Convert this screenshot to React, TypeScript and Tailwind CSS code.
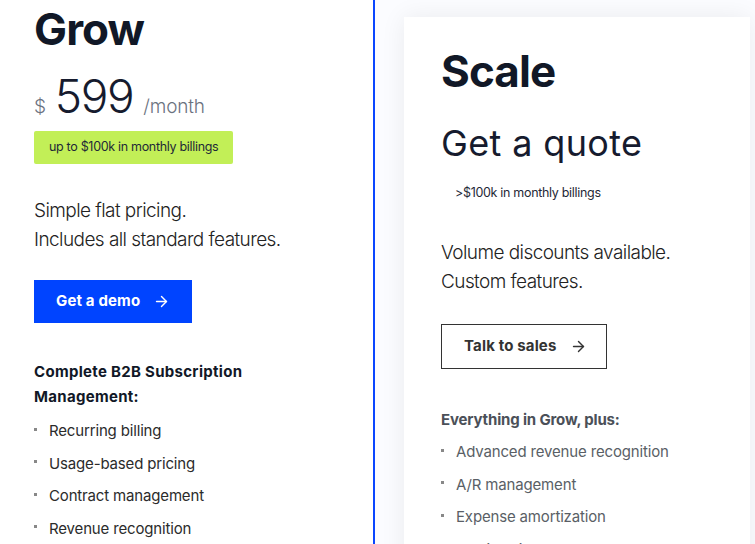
import { ArrowRight } from "lucide-react";

const growFeatures = [
  "Recurring billing",
  "Usage-based pricing",
  "Contract management",
  "Revenue recognition",
];

const scaleFeatures = [
  "Advanced revenue recognition",
  "A/R management",
  "Expense amortization",
  "Multi-entity",
];

function FeatureList({ items, tone }: { items: string[]; tone: string }) {
  return (
    <ul className="flex flex-col">
      {items.map((item) => (
        <li key={item} className={`flex items-center h-[32.5px] text-[15px] ${tone}`}>
          <span className="w-[3px] h-[3px] bg-[#888] mr-[12px] mt-[-4px]" />
          {item}
        </li>
      ))}
    </ul>
  );
}

export default function App() {
  return (
    <div className="w-[755px] h-[544px] overflow-hidden bg-white font-['Inter',sans-serif] tracking-[-0.01em] text-[#111827] flex">
      {/* Grow plan */}
      <div className="w-[375px] shrink-0 border-r-2 border-r-[#0a46ff] pl-[34px] pt-[7px]">
        <h2 className="text-[44px] font-bold leading-none tracking-[-0.02em]">Grow</h2>

        <div className="flex items-baseline mt-[22px] h-[44px]">
          <span className="text-[19px] text-[#6b7280] font-light">$</span>
          <span className="text-[46px] font-light ml-[9px] leading-none tracking-[-0.03em] text-[#161b2e]">599</span>
          <span className="text-[19px] text-[#6b7280] font-light ml-[10px]">/month</span>
        </div>

        <div className="mt-[14px] inline-flex items-center h-[33px] px-[15px] bg-[#c2ef57] rounded-[2px] text-[12.5px] tracking-[-0.025em] text-[#1f2937]">
          up to $100k in monthly billings
        </div>

        <p className="mt-[32px] text-[19px] leading-[29px] font-light text-[#222] tracking-[-0.03em]">
          Simple flat pricing.
          <br />
          Includes all standard features.
        </p>

        <button className="mt-[26px] flex items-center h-[43px] w-[158px] pl-[22px] bg-[#0044ff] text-white text-[15px] font-bold tracking-[0.01em]">
          Get a demo
          <ArrowRight className="ml-[13px] w-[17px] h-[17px]" strokeWidth={2} />
        </button>

        <p className="mt-[36px] text-[15px] font-bold leading-[25px] w-[240px] tracking-[0.02em] text-[#111827]">
          Complete B2B Subscription Management:
        </p>

        <div className="mt-[6px]">
          <FeatureList items={growFeatures} tone="text-[#2b2b2b]" />
        </div>
      </div>

      {/* Scale plan */}
      <div className="flex-1 bg-[#fbfcff] pl-[29px] pr-[5px] pt-[17px]">
        <div className="h-[600px] bg-white shadow-[0_0_24px_rgba(0,0,0,0.07)] pl-[37px] pt-[32px]">
          <h2 className="text-[44px] font-bold leading-none tracking-[-0.02em]">Scale</h2>

          <div className="mt-[28px] text-[36px] leading-[44px] tracking-[0.01em] text-[#161b2e]">Get a quote</div>

          <div className="mt-[12px] inline-flex items-center h-[33px] px-[14px] text-[12.5px] tracking-[-0.025em] text-[#1f2937]">
            &gt;$100k in monthly billings
          </div>

          <p className="mt-[28px] text-[19px] leading-[29px] font-light text-[#222] tracking-[-0.03em]">
            Volume discounts available.
            <br />
            Custom features.
          </p>

          <button className="mt-[28px] flex items-center h-[45px] w-[166px] pl-[22px] border border-[#333] text-[#333] text-[15px] font-bold tracking-[0.01em]">
            Talk to sales
            <ArrowRight className="ml-[13px] w-[17px] h-[17px]" strokeWidth={2} />
          </button>

          <p className="mt-[38px] text-[15px] font-bold leading-[25px] text-[#4b5058]">Everything in Grow, plus:</p>

          <div className="mt-[4px]">
            <FeatureList items={scaleFeatures} tone="text-[#5a5f66]" />
          </div>
        </div>
      </div>
    </div>
  );
}
